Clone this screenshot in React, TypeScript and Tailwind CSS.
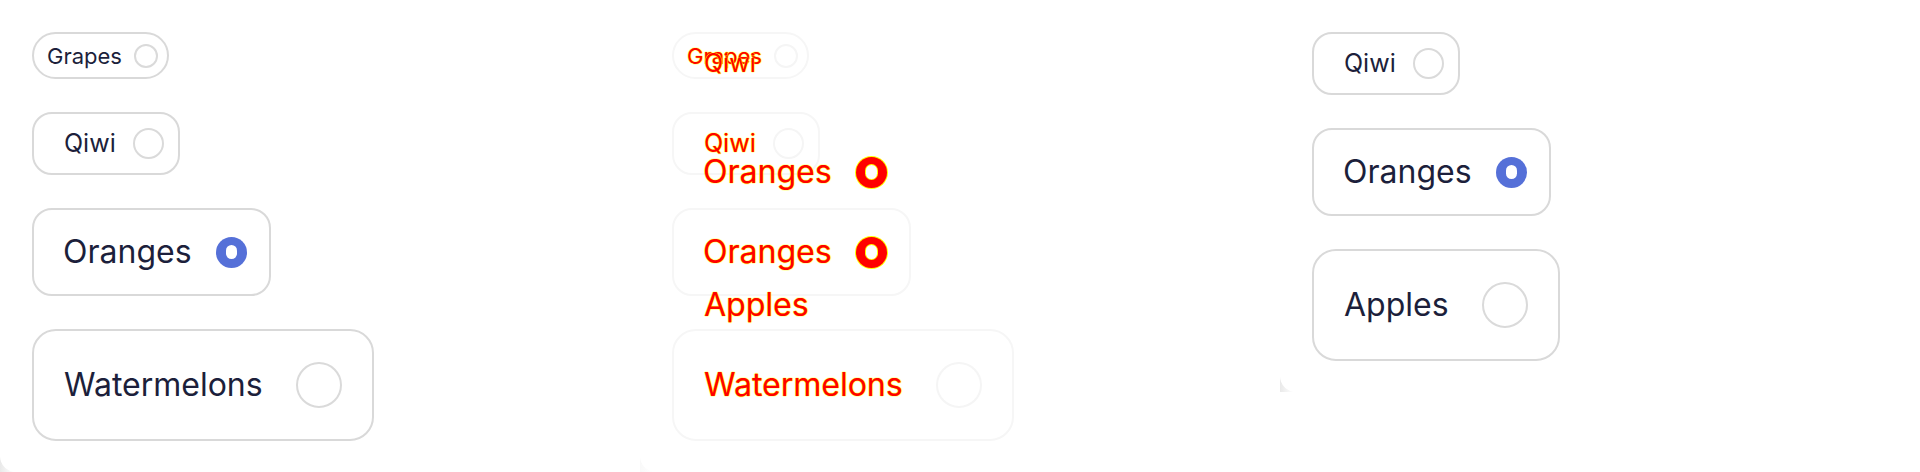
import { clsx } from "clsx";

type Size = "xs" | "sm" | "md" | "lg";
type Tone = "base" | "faint" | "ghost";

type Option = {
  label: string;
  size: Size;
  checked?: boolean;
};

const SIZES: Record<Size, { box: string; text: string; dot: string; hole: string }> = {
  xs: {
    box: "h-[47px] rounded-full pl-[13px] pr-[9px] gap-3",
    text: "text-[22px]",
    dot: "h-6 w-6",
    hole: "h-[11px] w-[9px]",
  },
  sm: {
    box: "h-[63px] rounded-[20px] pl-[30px] pr-[14px] gap-[17px]",
    text: "text-[25px]",
    dot: "h-[31px] w-[31px]",
    hole: "h-[14px] w-[11px]",
  },
  md: {
    box: "h-[88px] rounded-[20px] pl-[29px] pr-[22px] gap-6",
    text: "text-[32px]",
    dot: "h-[31px] w-[31px]",
    hole: "h-[14px] w-[11px]",
  },
  lg: {
    box: "h-[112px] rounded-3xl pl-[30px] pr-[30px] gap-[33px]",
    text: "text-[32px]",
    dot: "h-[46px] w-[46px]",
    hole: "h-[20px] w-[16px]",
  },
};

// diff marks: red fill, yellow anti-alias edge
const diffText =
  "text-[#ff0000] [text-shadow:0_0_1px_#ffff00,0_0_1px_#ffff00,0_0_1px_#ffff00]";

const LEFT: Option[] = [
  { label: "Grapes", size: "xs" },
  { label: "Qiwi", size: "sm" },
  { label: "Oranges", size: "md", checked: true },
  { label: "Watermelons", size: "lg" },
];

const RIGHT: Option[] = [
  { label: "Qiwi", size: "sm" },
  { label: "Oranges", size: "md", checked: true },
  { label: "Apples", size: "lg" },
];

function Dot({ size, checked, tone }: { size: Size; checked?: boolean; tone: Tone }) {
  const s = SIZES[size];

  if (checked) {
    return (
      <span
        className={clsx(
          "flex flex-none items-center justify-center rounded-full",
          s.dot,
          tone === "base"
            ? "bg-[#5570d8]"
            : "bg-[#ff0000] shadow-[0_0_0_1px_#ffff00]",
        )}
      >
        <span
          className={clsx(
            "rounded-full bg-white",
            s.hole,
            tone !== "base" && "shadow-[0_0_0_1px_#ffff00]",
          )}
        />
      </span>
    );
  }

  return (
    <span
      className={clsx(
        "flex-none rounded-full border-2",
        s.dot,
        tone === "base"
          ? "border-[#dadada]"
          : tone === "faint"
            ? "border-[#f5f5f5]"
            : "border-transparent",
      )}
    />
  );
}

function RadioPill({ option, tone }: { option: Option; tone: Tone }) {
  const s = SIZES[option.size];

  return (
    <div
      className={clsx(
        "flex flex-none items-center border-2",
        s.box,
        tone === "base"
          ? "border-[#d9d9d9]"
          : tone === "faint"
            ? "border-[#f6f6f6]"
            : "border-transparent",
      )}
    >
      <span
        className={clsx(
          "leading-none whitespace-nowrap",
          s.text,
          tone === "base" ? "text-[#1c1f3b]" : diffText,
        )}
      >
        {option.label}
      </span>
      <Dot size={option.size} checked={option.checked} tone={tone} />
    </div>
  );
}

function Column({ options, tone }: { options: Option[]; tone: Tone }) {
  return (
    <div className="flex flex-col items-start gap-[33px] px-8 pt-8 pb-[31px]">
      {options.map((o) => (
        <RadioPill key={o.label + o.size} option={o} tone={tone} />
      ))}
    </div>
  );
}

function Panel({
  children,
  faded = false,
}: {
  children: React.ReactNode;
  faded?: boolean;
}) {
  return (
    <div
      className={clsx(
        "w-[640px] flex-none",
        faded
          ? "bg-[linear-gradient(to_right,#f9f9f9,#ffffff_14px)]"
          : "bg-[linear-gradient(to_right,#e9e9e9,#ffffff_14px)]",
      )}
    >
      <div className="relative rounded-bl-2xl bg-white">{children}</div>
    </div>
  );
}

export default function App() {
  return (
    <div className="flex h-[472px] w-[1920px] items-start overflow-hidden bg-white font-[Inter,'Noto_Sans',sans-serif]">
      <Panel>
        <Column options={LEFT} tone="base" />
      </Panel>

      <Panel faded>
        <Column options={LEFT} tone="faint" />
        {/* changed pixels from the new render, laid over the old one */}
        <div className="absolute inset-0">
          <Column options={RIGHT} tone="ghost" />
        </div>
      </Panel>

      <Panel>
        <Column options={RIGHT} tone="base" />
      </Panel>
    </div>
  );
}
